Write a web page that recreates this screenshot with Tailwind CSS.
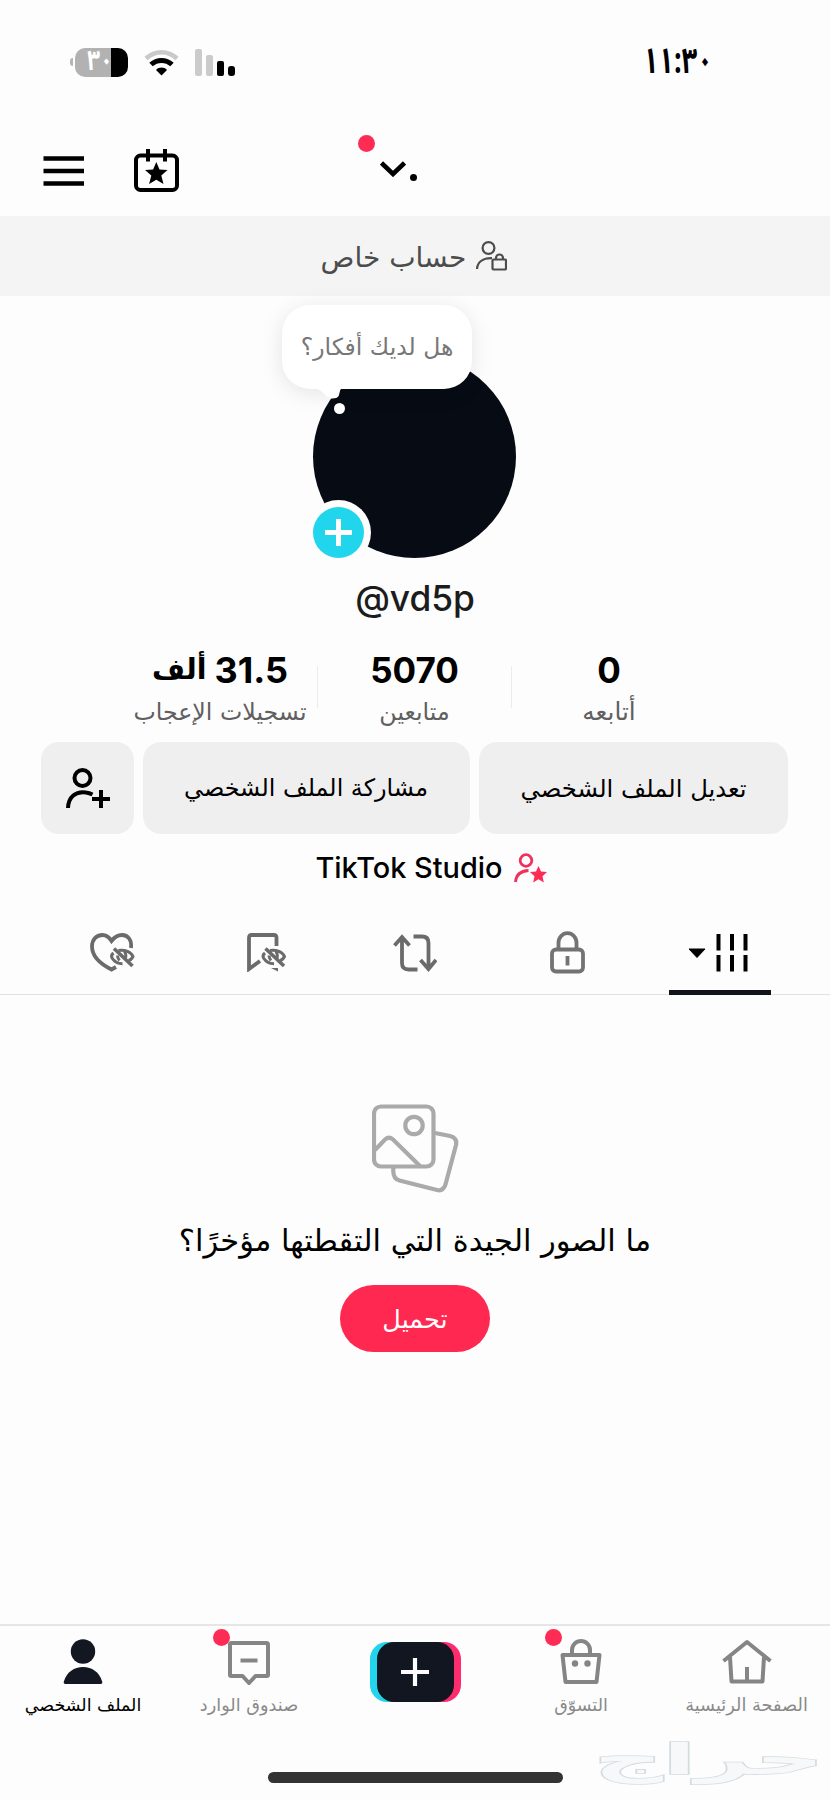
<!DOCTYPE html>
<html lang="ar">
<head>
<meta charset="utf-8">
<meta name="viewport" content="width=device-width">
<title>الملف الشخصي</title>
<script src="https://cdn.jsdelivr.net/npm/@tailwindcss/browser@4"></script>
</head>
<body class="bg-[#fdfdfd]">
<div class="flex h-[1800px] w-[830px] flex-col overflow-hidden bg-[#fdfdfd] font-['DejaVu_Sans',sans-serif] text-black">

  <!-- Status bar -->
  <div class="flex h-[124px] items-center justify-between pl-[70px] pr-[117px]">
    <div class="flex items-center">
      <div class="mr-[2px] h-2 w-[3px] rounded-l-full bg-[#b5b5b5]"></div>
      <div class="flex h-[29px] w-[53px] items-center justify-center rounded-[10px] bg-linear-to-r from-[#b2b2b2] from-68% to-black to-68% pr-0.5">
        <span dir="rtl" class="scale-x-80 pb-0.5 font-['Noto_Sans_Arabic','DejaVu_Sans',sans-serif] text-[28px] leading-[29px] font-bold text-white">٣٠</span>
      </div>
      <svg class="ml-4 h-[27px] w-[35px]" viewBox="0 0 35 27" fill="none">
        <path d="M2 9.500C11 1 24 1 33 9.500" stroke="#c9c9c9" stroke-width="4.500"/>
        <path d="M7 15.500C13 10 22 10 28 15.500" stroke="#000" stroke-width="5"/>
        <path d="M17.500 26.500 12 21C15 17.800 20 17.800 23 21Z" fill="#000"/>
      </svg>
      <div class="ml-4 flex h-[27px] items-end gap-1">
        <div class="h-[27px] w-[7px] rounded-[2px] bg-[#cbcbcb]"></div>
        <div class="h-[21px] w-[7px] rounded-[2px] bg-[#cbcbcb]"></div>
        <div class="h-[15px] w-[7px] rounded-[2px] bg-black"></div>
        <div class="h-[10px] w-[7px] rounded-[3px] bg-black"></div>
      </div>
    </div>
    <div class="origin-right scale-x-[0.75] font-['Noto_Sans_Arabic','DejaVu_Sans',sans-serif] text-[36px] leading-10 font-bold">١١:٣٠</div>
  </div>

  <!-- Header -->
  <div class="relative flex h-[92px] items-start pl-[43px]">
    <svg class="mt-8 h-[30px] w-[41px]" viewBox="0 0 41 30"><path d="M.500 2.500H41M.500 15H41M.500 27.500H41" stroke="#000" stroke-width="4.400"/></svg>
    <svg class="mt-[25px] ml-[50px] h-[43px] w-[45px]" viewBox="0 0 45 43" fill="none">
      <rect x="2" y="6.500" width="41" height="34.500" rx="4.500" stroke="#000" stroke-width="4"/>
      <path d="M14 0V12.500M31 0V12.500" stroke="#000" stroke-width="4"/>
      <path d="M22.300 13 25.500 20.500 33.500 21 27.300 26.500 29.500 35 22.300 30.700 15.100 35 17.300 26.500 11 21 19.100 20.500Z" fill="#000"/>
    </svg>
    <div class="ml-[179px] mt-[11px] size-[17px] rounded-full bg-[#fe2c55]"></div>
    <svg class="ml-[5px] mt-[37px] h-4 w-[26px]" viewBox="0 0 26 16" fill="none"><path d="M1.500 2 13 13 24.500 2" stroke="#000" stroke-width="4.600"/></svg>
    <div class="mt-[50px] ml-1 size-[7px] rounded-full bg-black"></div>
  </div>

  <!-- Private account banner -->
  <div class="flex h-[80px] items-center justify-center gap-2.5 bg-[#f4f4f4] pr-0.5 text-[#4c4c4c]">
    <span dir="rtl" class="pt-1 text-[28px] leading-10">حساب خاص</span>
    <svg class="h-[30px] w-[31px]" viewBox="0 0 31 30" fill="none" stroke="#4c4c4c" stroke-width="2.200">
      <circle cx="12.500" cy="7" r="5.900"/>
      <path d="M1 28C1.500 21 7 17 16 17.200"/>
      <rect x="16.500" y="18.500" width="13.500" height="10" rx="1"/>
      <path d="M20 18.500V17a3.500 3.500 0 0 1 7 0v1.500"/>
    </svg>
  </div>

  <!-- Avatar -->
  <div class="relative flex h-[263px] justify-center pt-[59px] pr-px">
    <div class="size-[203px] rounded-full bg-[#070b13]"></div>
    <div class="absolute top-[9px] left-[282px] h-[84px] w-[190px] rounded-[28px] bg-white shadow-[0_4px_22px_rgba(0,0,0,0.1)]"></div>
    <svg class="absolute top-[92px] left-[316px] h-[28px] w-[30px]" viewBox="0 0 30 28" fill="#fff">
      <path d="M0 0H26C23.500 2 24 4 23 7C22.500 9.500 20 10.500 16 10.500C12 10.500 9 6 5 3Z"/>
      <circle cx="23.500" cy="20.500" r="5.500"/>
    </svg>
    <div dir="rtl" class="absolute top-[9px] left-[282px] flex h-[84px] w-[190px] items-center justify-center pt-0.5 text-[23.500px] whitespace-nowrap text-[#777]">هل لديك أفكار؟</div>
    <div class="absolute top-[204px] left-[306px] flex size-[65px] items-center justify-center rounded-full bg-[#fdfdfd]">
      <div class="flex size-[51px] items-center justify-center rounded-full bg-[#20d5ec]">
        <svg class="size-[27px]" viewBox="0 0 27 27"><path d="M13.500 0V27M0 13.500H27" stroke="#fff" stroke-width="5"/></svg>
      </div>
    </div>
  </div>
  <div class="flex h-[81px] items-center justify-center font-[Inter,sans-serif] text-[35.300px] font-medium text-[#1c1c1c]">@vd5p</div>

  <!-- Stats -->
  <div class="flex h-[102px] justify-center pt-[9px] pr-px">
    <div class="flex w-[194px] flex-col items-center">
      <div class="flex h-[42px] items-center gap-[8px]">
        <span dir="rtl" class="text-[28.500px] leading-10 font-bold">ألف</span>
        <span class="font-[Inter,sans-serif] text-[36px] leading-10 font-bold">31.5</span>
      </div>
      <div dir="rtl" class="mt-[3px] text-[23.700px] leading-9 whitespace-nowrap text-[#606060]">تسجيلات الإعجاب</div>
    </div>
    <div class="mt-[17px] h-[42px] w-px bg-[#ececec]"></div>
    <div class="flex w-[193px] flex-col items-center">
      <div class="flex h-[42px] items-center font-[Inter,sans-serif] text-[35px] leading-10 font-bold">5070</div>
      <div dir="rtl" class="mt-[3px] text-[23.700px] leading-9 text-[#606060]">متابعين</div>
    </div>
    <div class="mt-[17px] h-[42px] w-px bg-[#ececec]"></div>
    <div class="flex w-[194px] flex-col items-center">
      <div class="flex h-[42px] items-center font-[Inter,sans-serif] text-[35px] leading-10 font-bold">0</div>
      <div dir="rtl" class="mt-[3px] text-[24.700px] leading-9 text-[#606060]">أتابعه</div>
    </div>
  </div>

  <!-- Actions -->
  <div class="flex h-[92px] gap-[9px] px-[41px]">
    <div class="flex w-[93px] items-center justify-center rounded-[18px] bg-[#efefef]">
      <svg class="h-[41px] w-[44px]" viewBox="0 0 44 41" fill="none" stroke="#000" stroke-width="4">
        <circle cx="16.500" cy="10" r="8"/>
        <path d="M2 40C2.500 29 9.500 23 20 24.500C22.500 24.800 24.500 25.500 26.500 26.500"/>
        <path d="M35 22V40M26 31H44"/>
      </svg>
    </div>
    <div dir="rtl" class="flex w-[327px] items-center justify-center rounded-[18px] bg-[#efefef] pt-0.5 pr-px text-[23.900px]">مشاركة الملف الشخصي</div>
    <div dir="rtl" class="flex w-[309px] items-center justify-center rounded-[18px] bg-[#efefef] pt-0.5 text-[24.300px]">تعديل الملف الشخصي</div>
  </div>
  <div class="flex h-[68px] items-center justify-center gap-[11px] pl-[32px]">
    <span class="font-[Inter,sans-serif] text-[28.900px] font-medium">TikTok Studio</span>
    <svg class="h-[30px] w-[33px]" viewBox="0 0 33 30" fill="none">
      <circle cx="12" cy="7.500" r="5.800" stroke="#f0315c" stroke-width="2.800"/>
      <path d="M1.500 29C2 22 6 18 14.500 17.500" stroke="#f0315c" stroke-width="2.800"/>
      <path d="M24.500 13 27 18.500 33 19 28.500 23.200 29.800 29.500 24.500 26.300 19.200 29.500 20.500 23.200 16 19 22 18.500Z" fill="#fe2c55"/>
    </svg>
  </div>

  <!-- Tabs -->
  <div class="flex h-[93px] border-b border-[#e2e2e2] px-[35px]">
    <div class="flex w-[152px] justify-center pt-[31px] pl-0.5">
      <svg class="h-[39px] w-[45px]" viewBox="0 0 45 39" fill="none" stroke="#6b6b6b" stroke-width="3.800">
        <path d="M41 15C42 7 38 2 32 2C27.500 2 24.500 4 21.500 8C19 4 16.500 2 12.500 2C6 2 2 7 2 13.500C2 23 10.500 31 21.500 36.500L26 34"/>
        <path d="M24 15.500 42.500 33" stroke-width="3.600"/>
        <path d="M28.500 17.500C35 16.500 41 19 43 23.500C42 25.500 40.500 27 38.500 27.500M34.500 18.500Q36.500 21.500 35.500 25M23.500 20C21 22 21.200 23.500 22 25C24.500 29 28 30.700 32.500 30.700M27.500 22.500Q27.500 25 29.500 27.500" stroke-width="3"/>
      </svg>
    </div>
    <div class="flex w-[152px] justify-center pt-[31px] pl-[7px]">
      <svg class="h-[39px] w-[40px]" viewBox="0 0 40 39" fill="none" stroke="#6b6b6b" stroke-width="3.800">
        <path d="M29.500 13V4.500Q29.500 2 27 2H4.500Q2 2 2 4.500V36L13 28"/>
        <path d="M24 35H31V38.500Z" fill="#6b6b6b" stroke="none"/>
        <path d="M18.500 15.500 37 33" stroke-width="3.600"/>
        <path d="M23 17.500C29.500 16.500 35.500 19 37.500 23.500C36.500 25.500 35 27 33 27.500M29 18.500Q31 21.500 30 25M18 20C15.500 22 15.700 23.500 16.500 25C19 29 22.500 30.700 27 30.700M22 22.500Q22 25 24 27.500" stroke-width="3"/>
      </svg>
    </div>
    <div class="flex w-[152px] justify-center pt-[32px]">
      <svg class="h-[38px] w-[44px]" viewBox="0 0 44 38" fill="none" stroke="#6b6b6b" stroke-width="3.800">
        <path d="M1.500 11.500 9 3 16.500 11.500M9 3V29Q9 35.500 15.500 35.500H24.500"/>
        <path d="M27.500 26 35.500 35 43 26M35.500 35V9Q35.500 2.500 29 2.500H20.500"/>
      </svg>
    </div>
    <div class="flex w-[152px] justify-center pt-[29px]">
      <svg class="h-[43px] w-[35px]" viewBox="0 0 35 43" fill="none" stroke="#737373" stroke-width="3.800">
        <rect x="2" y="18.500" width="31" height="22" rx="4"/>
        <path d="M8.500 18V12a9 9.800 0 0 1 18 0v6M17.500 25v9.500"/>
      </svg>
    </div>
    <div class="relative flex w-[152px] justify-center gap-[10px] pt-[31px] pr-0.5">
      <svg class="mt-[15px] h-[11px] w-[18px]" viewBox="0 0 18 11"><path d="M1 1H17L9 9.500Z" stroke="#000" stroke-width="1" stroke-linejoin="round"/></svg>
      <svg class="h-[39px] w-[32px]" viewBox="0 0 32 39"><path d="M2.500 1V17.500M16 1V17.500M29.500 1V17.500M2.500 22V38.500M16 22V38.500M29.500 22V38.500" stroke="#000" stroke-width="4"/></svg>
      <div class="absolute -bottom-px left-[26px] h-[5px] w-[102px] bg-[#13151c]"></div>
    </div>
  </div>

  <!-- Empty state -->
  <div class="flex flex-1 flex-col items-center pt-[109px]">
    <svg class="h-[89px] w-[87px]" viewBox="0 0 87 89" fill="none" stroke="#aaa" stroke-width="4.200">
      <rect x="2" y="2.500" width="59.500" height="60" rx="7"/>
      <circle cx="42" cy="21.500" r="8.700"/>
      <path d="M3 46 13 35.500Q17 32 21 35.500L48 62M63 29 78 32Q85.500 34 84 41L73.500 80.500Q71 87.500 65 86L27.500 76.500Q20 74.500 21.500 63"/>
    </svg>
    <div dir="rtl" class="mt-[23px] text-[30.500px] leading-[50px] whitespace-nowrap">ما الصور الجيدة التي التقطتها مؤخرًا؟</div>
    <div dir="rtl" class="mt-[19px] flex h-[67px] w-[150px] items-center justify-center rounded-full bg-[#fe2851] pt-0.5 text-[25.500px] text-white">تحميل</div>
  </div>

  <!-- Bottom navigation -->
  <div class="flex h-[112px] border-t-2 border-[#e6e6e6] text-[17.500px] leading-7 text-[#8a8a8a]">
    <div class="flex w-[166px] flex-col items-center pt-[13px]">
      <svg class="h-[46px] w-[40px]" viewBox="0 0 40 46" fill="#131722"><circle cx="20" cy="12.500" r="12.200"/><path d="M2.500 45Q0 45 1 42C4 33 11 28 20 28S36 33 39 42Q40 45 37.500 45Z"/></svg>
      <span dir="rtl" class="mt-1.5 text-[17.500px] text-black">الملف الشخصي</span>
    </div>
    <div class="relative flex w-[166px] flex-col items-center pt-[15px]">
      <div class="absolute top-[3px] left-[47px] size-[17px] rounded-full bg-[#fe2c55]"></div>
      <svg class="h-[44px] w-[42px]" viewBox="0 0 42 44" fill="none" stroke="#858585" stroke-width="4" stroke-linejoin="round"><path d="M3.500 2H38.500Q40 2 40 3.500V34Q40 35 38.500 35H27.500L21 42 14.500 35H3.500Q2 35 2 34V3.500Q2 2 3.500 2ZM12.500 19.500H29.500"/></svg>
      <span dir="rtl" class="mt-1.5 text-[17.700px]">صندوق الوارد</span>
    </div>
    <div class="flex w-[166px] justify-center pt-4">
      <div class="flex h-[60px] w-[91px] justify-center rounded-[17px] bg-linear-to-r from-[#20d5ec] from-50% to-[#fe2c6f] to-50%">
        <div class="flex h-[60px] w-[77px] items-center justify-center rounded-[17px] bg-[#111620]">
          <svg class="size-7" viewBox="0 0 28 28"><path d="M14 0V28M0 14H28" stroke="#fff" stroke-width="4.200"/></svg>
        </div>
      </div>
    </div>
    <div class="relative flex w-[166px] flex-col items-center pt-[13px]">
      <div class="absolute top-[3px] left-[47px] size-[17px] rounded-full bg-[#fe2c55]"></div>
      <svg class="h-[46px] w-[42px]" viewBox="0 0 42 46" fill="none" stroke="#858585" stroke-width="4" stroke-linejoin="round"><path d="M2.500 16H39.500L36.500 43H5.500Z"/><path d="M12 15V11a9 9 0 0 1 18 0v4"/><circle cx="15" cy="24.500" r="3.200" fill="#858585" stroke="none"/><circle cx="27.500" cy="24.500" r="3.200" fill="#858585" stroke="none"/></svg>
      <span dir="rtl" class="mt-1.5">التسوّق</span>
    </div>
    <div class="flex w-[166px] flex-col items-center pt-[13px] pr-px">
      <svg class="h-[46px] w-[50px]" viewBox="0 0 50 46" fill="none" stroke="#858585" stroke-width="4" stroke-linejoin="round"><path d="M1.500 22 25 3 48.500 22M8 18 9.500 42.500H40.500L42 18M25 28V42"/></svg>
      <span dir="rtl" class="mt-1.5 text-[17.800px]">الصفحة الرئيسية</span>
    </div>
  </div>
  <div class="relative flex h-[64px] justify-center pt-9">
    <div class="h-[11px] w-[295px] rounded-full bg-[#333]"></div>
    <svg class="absolute top-0 left-[590px] h-[60px] w-[240px]" viewBox="0 0 240 60">
      <text x="119" y="38" direction="rtl" text-anchor="middle" textLength="230" lengthAdjust="spacingAndGlyphs" font-family="DejaVu Sans" font-weight="bold" font-size="42" fill="#f6f8f9" stroke="#d5dce0" stroke-width="1.600" paint-order="stroke">حراج</text>
    </svg>
  </div>
</div>
</body>
</html>
